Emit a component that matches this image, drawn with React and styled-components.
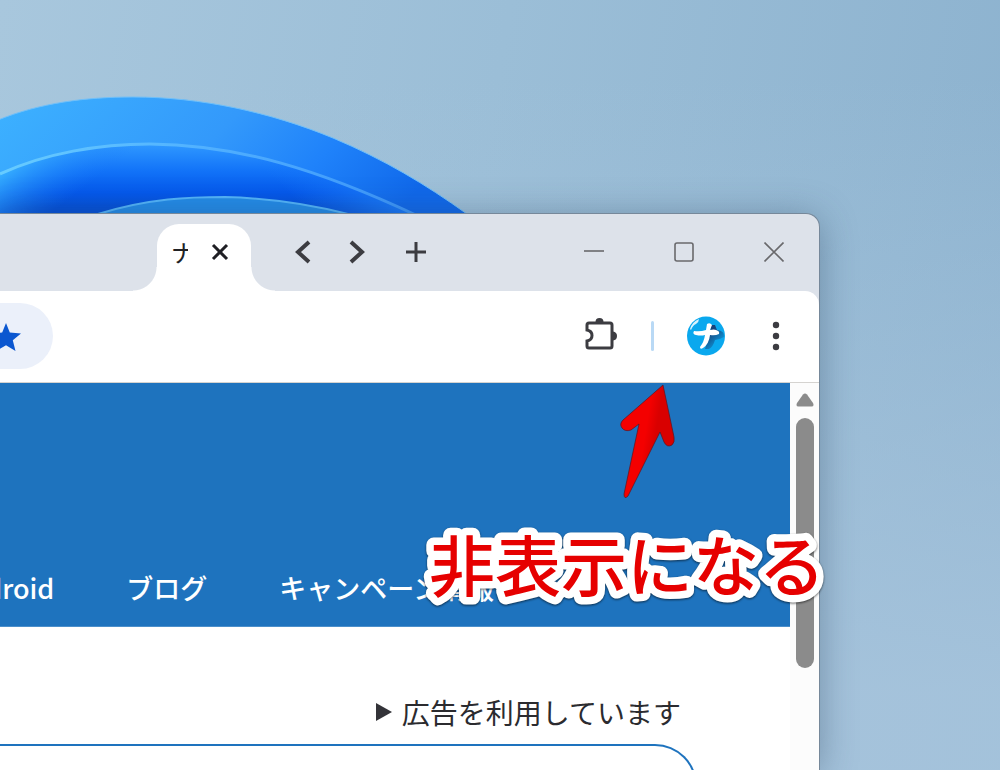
import React from 'react';
import styled, { createGlobalStyle } from 'styled-components';

const GlobalStyle = createGlobalStyle`
  * {
    box-sizing: border-box;
  }
  body {
    margin: 0;
    font-family: "Noto Sans CJK JP", "Noto Sans", sans-serif;
    color: #202124;
  }
  svg {
    display: block;
    flex: none;
  }
`;

const Desktop = styled.div`
  position: relative;
  display: flex;
  height: 100vh;
  padding: 213px 18% 0 0;
  overflow: hidden;
  background:
    linear-gradient(180deg, rgba(168, 197, 221, 0) 10%, rgba(168, 197, 221, 0.85) 90%),
    linear-gradient(100deg, #a8c7dd 0%, #9bbed7 45%, #8bb1ce 100%);
`;

const Wallpaper = styled.svg`
  position: absolute;
  top: 0;
  left: 0;
`;

const BrowserWindow = styled.main`
  position: relative;
  display: flex;
  flex-direction: column;
  flex: 1;
  min-width: 0;
  border-top: 1px solid #76889a;
  border-right: 1px solid #76889a;
  border-top-right-radius: 14px;
  background: #dde2ea;
  box-shadow: 0 4px 36px rgba(40, 65, 90, 0.4);
`;

const IconButton = styled.button`
  display: flex;
  align-items: center;
  justify-content: center;
  width: ${(p) => p.$width}px;
  height: ${(p) => p.$height || 36}px;
  padding: 0;
  border: 0;
  background: none;
  color: ${(p) => p.$color || '#3c3c41'};
`;

const TitleBar = styled.header`
  display: flex;
  align-items: center;
  height: 77px;
  padding-left: 157px;
`;

const Tab = styled.div`
  position: relative;
  display: flex;
  align-items: center;
  align-self: flex-end;
  justify-content: space-between;
  width: 94px;
  height: 67px;
  padding: 0 22px 12px 14px;
  border-radius: 22px 22px 0 0;
  background: #fff;

  &::before,
  &::after {
    content: "";
    position: absolute;
    bottom: 0;
    width: 24px;
    height: 24px;
  }
  &::before {
    right: 100%;
    background: radial-gradient(circle at 0 0, transparent 23px, #fff 24px);
  }
  &::after {
    left: 100%;
    background: radial-gradient(circle at 100% 0, transparent 23px, #fff 24px);
  }
`;

const TabTitle = styled.span`
  width: 17px;
  overflow: hidden;
  font-size: 24px;
  line-height: 32px;
  white-space: nowrap;
`;

const TabTools = styled.div`
  display: flex;
  margin: 0 0 2px 25px;
`;

const NewTab = styled.div`
  margin-left: 5px;
`;

const WindowControls = styled.div`
  display: flex;
  margin: 0 0 2px auto;
`;

const Toolbar = styled.div`
  display: flex;
  align-items: center;
  justify-content: space-between;
  height: 92px;
  padding: 0 25px 2px 0;
  border-bottom: 1px solid #d5d3d0;
  border-top-right-radius: 14px;
  background: #fff;
`;

const AddressEnd = styled.div`
  display: flex;
  align-items: center;
  width: 53px;
  height: 66px;
  overflow: hidden;
  border-radius: 0 33px 33px 0;
  background: #ebf0fa;
`;

const Actions = styled.div`
  display: flex;
  align-items: center;
  gap: 33px;
`;

const Separator = styled.span`
  width: 3px;
  height: 30px;
  border-radius: 2px;
  background: #b9d9f5;
`;

const Viewport = styled.div`
  display: flex;
  flex: 1;
  min-height: 0;
  background: #fff;
`;

const Page = styled.div`
  flex: 1;
  min-width: 0;
  overflow: hidden;
`;

const Hero = styled.div`
  display: flex;
  align-items: flex-end;
  height: 244px;
  padding-bottom: 20px;
  border-bottom: 1px solid #4b8fcb;
  background: #1e73be;
`;

const Nav = styled.nav`
  display: flex;
  flex: 1;
  justify-content: flex-end;
  gap: 72px;
  min-width: 0;
  padding-right: 296px;
`;

const NavLink = styled.a`
  flex: none;
  color: #fff;
  font-size: 27px;
  font-weight: 500;
  line-height: 36px;
  text-decoration: none;
  white-space: nowrap;
`;

const Article = styled.div`
  padding: 65px 93px 0 0;
`;

const AdNotice = styled.p`
  display: flex;
  align-items: center;
  justify-content: flex-end;
  gap: 9px;
  margin: 0;
  padding-right: 16px;
  color: #2b2b2f;
  font-size: 28px;
  line-height: 40px;
`;

const ContentBox = styled.section`
  height: 160px;
  margin-top: 12px;
  border: 2px solid #1e73be;
  border-left: 0;
  border-radius: 0 42px 42px 0;
`;

const Scrollbar = styled.div`
  display: flex;
  flex-direction: column;
  align-items: center;
  gap: 11px;
  width: 29px;
  padding-top: 10px;
  background: #fcfcfc;
`;

const Thumb = styled.div`
  width: 18px;
  height: 250px;
  border-radius: 9px;
  background: #8b8b8b;
`;

const Arrow = styled.svg`
  position: absolute;
  top: 167px;
  right: 139px;
`;

const Caption = styled.svg`
  position: absolute;
  top: 306px;
  right: -10px;
  overflow: visible;

  text {
    fill: #e60000;
    stroke: #fff;
    stroke-width: 15px;
    stroke-linejoin: round;
    paint-order: stroke;
    font-size: 66px;
    font-weight: 500;
    filter: drop-shadow(0 1px 1px rgba(0, 0, 0, 0.6));
  }
`;

const Bloom = () => (
  <Wallpaper width="480" height="240" viewBox="0 0 480 240" aria-hidden="true">
    <defs>
      <linearGradient id="outer" x1="0" y1="0" x2="1" y2="0.3">
        <stop offset="0" stopColor="#3db2ff" />
        <stop offset="0.5" stopColor="#3399fb" />
        <stop offset="0.75" stopColor="#1f82fa" />
        <stop offset="1" stopColor="#1068ea" />
      </linearGradient>
      <linearGradient id="depth" gradientUnits="userSpaceOnUse" x1="215" y1="146" x2="215" y2="208">
        <stop offset="0" stopColor="#2d96ff" />
        <stop offset="0.4" stopColor="#1273f8" />
        <stop offset="0.75" stopColor="#0559ec" />
        <stop offset="1" stopColor="#0450d8" />
      </linearGradient>
      <linearGradient id="glow" gradientUnits="userSpaceOnUse" x1="0" y1="170" x2="40" y2="222">
        <stop offset="0" stopColor="#3ab4ff" />
        <stop offset="1" stopColor="#1a7dfa" stopOpacity="0" />
      </linearGradient>
      <linearGradient id="right" gradientUnits="userSpaceOnUse" x1="310" y1="215" x2="360" y2="165">
        <stop offset="0" stopColor="#1878fa" stopOpacity="0" />
        <stop offset="1" stopColor="#1878fa" />
      </linearGradient>
      <linearGradient id="ridge" x1="0" y1="0" x2="1" y2="0">
        <stop offset="0" stopColor="#67ccff" />
        <stop offset="0.5" stopColor="#50b0ff" />
        <stop offset="1" stopColor="#3b94fb" />
      </linearGradient>
    </defs>
    <path
      d="M-2 120C40 103 85 97 133 97C200 97 270 112 333 138C385 160 425 184 467 214V240H-2Z"
      fill="url(#outer)"
      stroke="#6fc0fa"
      strokeWidth="1"
    />
    <path d="M0 174C45 153 100 144 150 144C240 145 320 170 418 216V240H0Z" fill="url(#depth)" />
    <path d="M0 174C45 153 100 144 150 144C240 145 320 170 418 216V240H0Z" fill="url(#glow)" />
    <path d="M0 174C45 153 100 144 150 144C240 145 320 170 418 216V240H0Z" fill="url(#right)" />
    <path
      d="M0 174C45 153 100 144 150 144C240 145 320 170 418 216"
      fill="none"
      stroke="url(#ridge)"
      strokeWidth="3"
    />
    <path d="M98 214C150 198 190 197 225 197C265 198 305 203 348 214Z" fill="#238be8" stroke="#53b4fa" strokeWidth="2" />
  </Wallpaper>
);

const ProfilePicture = () => (
  <svg width="38" height="40" viewBox="0 0 38 40">
    <defs>
      <linearGradient id="shade" x1="0" y1="0" x2="0.8" y2="1">
        <stop offset="0.3" stopColor="#17427a" />
        <stop offset="0.95" stopColor="#0aa5ea" />
      </linearGradient>
    </defs>
    <ellipse cx="19" cy="20" rx="19" ry="19.5" fill="#0aa8ee" />
    <path d="M18 33L23 18L24 9L28 9L30 14Q38 15 37 21Q32 24 28 24Q26 31 22 33Z" fill="url(#shade)" />
    <path d="M3 13Q5 6 12 3Q12 6 9 8Q6 9 4 14Z" fill="#d9f2fd" />
    <path
      d="M7 15Q5 18 9 19Q14 20 18 19Q17 26 13 31Q13 34 16 32Q22 28 23 19Q28 20 32 18Q33 15 29 14Q27 13 23 14L25 9Q23 6 20 8L19 14Q13 16 7 15Z"
      fill="#fff"
    />
  </svg>
);

const App = () => {
  return (
    <Desktop>
      <GlobalStyle />
      <Bloom />
      <BrowserWindow>
        <TitleBar>
          <Tab>
            <TabTitle>ナ</TabTitle>
            <IconButton $width={18} $color="#1f1f24" aria-label="タブを閉じる">
              <svg width="18" height="18" viewBox="0 0 18 18" stroke="currentColor" strokeWidth="3">
                <path d="M2 2L16 16M16 2L2 16" />
              </svg>
            </IconButton>
          </Tab>
          <TabTools>
            <IconButton $width={54} aria-label="前へ">
              <svg width="18" height="24" viewBox="0 0 18 24" fill="none" stroke="currentColor" strokeWidth="4">
                <path d="M15 2L4 12L15 22" />
              </svg>
            </IconButton>
            <IconButton $width={54} aria-label="次へ">
              <svg width="18" height="24" viewBox="0 0 18 24" fill="none" stroke="currentColor" strokeWidth="4">
                <path d="M3 2L14 12L3 22" />
              </svg>
            </IconButton>
            <NewTab>
              <IconButton $width={54} aria-label="新しいタブ">
                <svg width="20" height="20" viewBox="0 0 20 20" stroke="currentColor" strokeWidth="3">
                  <path d="M10 0V20M0 10H20" />
                </svg>
              </IconButton>
            </NewTab>
          </TabTools>
          <WindowControls>
            <IconButton $width={90} $color="#69696c" aria-label="最小化">
              <svg width="20" height="20" viewBox="0 0 20 20" stroke="currentColor" strokeWidth="1.6">
                <path d="M0 9H20" />
              </svg>
            </IconButton>
            <IconButton $width={90} $color="#69696c" aria-label="最大化">
              <svg width="20" height="20" viewBox="0 0 20 20" fill="none" stroke="currentColor" strokeWidth="1.6">
                <rect x="1" y="1" width="18" height="18" rx="2" />
              </svg>
            </IconButton>
            <IconButton $width={90} $color="#69696c" aria-label="閉じる">
              <svg width="20" height="20" viewBox="0 0 20 20" stroke="currentColor" strokeWidth="1.6">
                <path d="M0.5 0.5L19.5 19.5M19.5 0.5L0.5 19.5" />
              </svg>
            </IconButton>
          </WindowControls>
        </TitleBar>

        <Toolbar>
          <AddressEnd>
            <IconButton $width={22} $color="#0b57d0" aria-label="ブックマーク">
              <svg width="22" height="32" viewBox="0 0 22 32">
                <path
                  d="M6 3L9.8 12.6L21 13.5L12.8 20.3L15.5 31L6 25.2L-3.5 31L-0.8 20.3L-9 13.5L2.2 12.6Z"
                  fill="currentColor"
                />
              </svg>
            </IconButton>
          </AddressEnd>
          <Actions>
            <IconButton $width={36} aria-label="拡張機能">
              <svg width="36" height="36" viewBox="0 0 36 36">
                <path
                  d="M7 5H28Q30 5 30 7V28Q30 30 28 30H7Q5 30 5 28V23Q10 22 10 17.5Q10 13 5 12V7Q5 5 7 5Z"
                  fill="none"
                  stroke="currentColor"
                  strokeWidth="3"
                />
                <path d="M13.5 4Q13.5 0 17.5 0Q21.5 0 21.5 4ZM31 13.5Q35 14 35 18Q35 22 31 22.5Z" fill="currentColor" />
              </svg>
            </IconButton>
            <Separator />
            <IconButton $width={38} $height={40} aria-label="プロフィール">
              <ProfilePicture />
            </IconButton>
            <IconButton $width={36} aria-label="メニュー">
              <svg width="8" height="30" viewBox="0 0 8 30" fill="currentColor">
                <circle cx="4" cy="4" r="3.2" />
                <circle cx="4" cy="15" r="3.2" />
                <circle cx="4" cy="26" r="3.2" />
              </svg>
            </IconButton>
          </Actions>
        </Toolbar>

        <Viewport>
          <Page>
            <Hero>
              <Nav>
                <NavLink href="#android">Android</NavLink>
                <NavLink href="#blog">ブログ</NavLink>
                <NavLink href="#campaign">キャンペーン情報</NavLink>
              </Nav>
            </Hero>
            <Article>
              <AdNotice>
                <svg width="18" height="20" viewBox="0 0 18 20">
                  <path d="M1 1L17 10L1 19Z" fill="#333338" />
                </svg>
                広告を利用しています
              </AdNotice>
              <ContentBox />
            </Article>
          </Page>
          <Scrollbar>
            <svg width="18" height="14" viewBox="0 0 18 14">
              <path d="M7 1.5Q9 -0.5 11 1.5L17 10Q18.5 13.5 15.5 13.5H2.5Q-0.5 13.5 1 10Z" fill="#8b8b8b" />
            </svg>
            <Thumb />
          </Scrollbar>
        </Viewport>

        <Arrow width="64" height="122" viewBox="0 0 64 122" aria-hidden="true">
          <defs>
            <linearGradient id="red" x1="0.2" y1="0.3" x2="0.8" y2="0.5">
              <stop offset="0.45" stopColor="#f40000" />
              <stop offset="0.75" stopColor="#d90000" />
            </linearGradient>
          </defs>
          <path
            d="M47 4L7 39Q3 43 6 47Q9 51 15 49L23 43L8 113Q8 119 12 115L44 51L48 61Q51 67 56 64Q59 61 58 56Z"
            fill="url(#red)"
            stroke="#5c1420"
            strokeWidth="0.7"
          />
        </Arrow>
        <Caption width="400" height="92" viewBox="0 0 400 92">
          <text x="0" y="71">非表示になる</text>
        </Caption>
      </BrowserWindow>
    </Desktop>
  );
};

export default App;
